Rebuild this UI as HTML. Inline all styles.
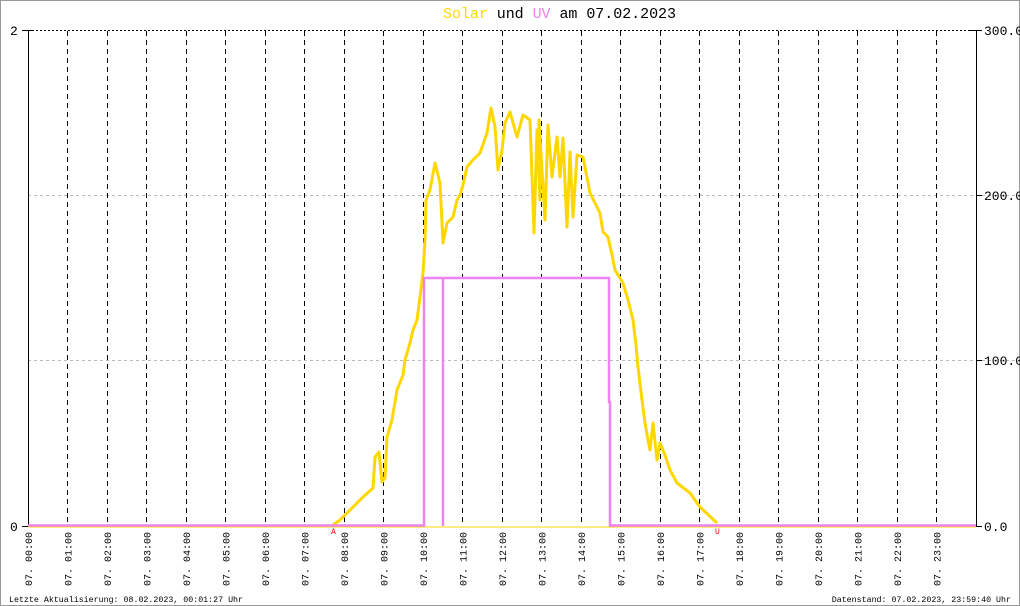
<!DOCTYPE html>
<html><head><meta charset="utf-8"><style>
html,body{margin:0;padding:0;background:#fff;}
svg{display:block;}
</style></head><body>
<svg width="1020" height="606" xmlns="http://www.w3.org/2000/svg" font-family="Liberation Mono, monospace">
<rect x="0.5" y="0.5" width="1019" height="605" fill="#fff" stroke="#999"/>
<text x="443" y="18" font-size="15" textLength="233" lengthAdjust="spacing"><tspan fill="#ffd700">Solar</tspan> und <tspan fill="#ee82ee">UV</tspan> am 07.02.2023</text>
<g stroke="#bbb" stroke-dasharray="3,3">
<line x1="28" y1="195.5" x2="1020" y2="195.5"/>
<line x1="28" y1="360.5" x2="1020" y2="360.5"/>
</g>
<line x1="28" y1="30.5" x2="976" y2="30.5" stroke="#000" stroke-dasharray="2,2"/>
<g stroke="#000" stroke-dasharray="5,4">
<line x1="67.5" y1="31" x2="67.5" y2="526"/><line x1="107.5" y1="31" x2="107.5" y2="526"/><line x1="146.5" y1="31" x2="146.5" y2="526"/><line x1="186.5" y1="31" x2="186.5" y2="526"/><line x1="225.5" y1="31" x2="225.5" y2="526"/><line x1="265.5" y1="31" x2="265.5" y2="526"/><line x1="304.5" y1="31" x2="304.5" y2="526"/><line x1="344.5" y1="31" x2="344.5" y2="526"/><line x1="383.5" y1="31" x2="383.5" y2="526"/><line x1="423.5" y1="31" x2="423.5" y2="526"/><line x1="462.5" y1="31" x2="462.5" y2="526"/><line x1="502.5" y1="31" x2="502.5" y2="526"/><line x1="541.5" y1="31" x2="541.5" y2="526"/><line x1="581.5" y1="31" x2="581.5" y2="526"/><line x1="620.5" y1="31" x2="620.5" y2="526"/><line x1="660.5" y1="31" x2="660.5" y2="526"/><line x1="699.5" y1="31" x2="699.5" y2="526"/><line x1="739.5" y1="31" x2="739.5" y2="526"/><line x1="778.5" y1="31" x2="778.5" y2="526"/><line x1="818.5" y1="31" x2="818.5" y2="526"/><line x1="857.5" y1="31" x2="857.5" y2="526"/><line x1="897.5" y1="31" x2="897.5" y2="526"/><line x1="936.5" y1="31" x2="936.5" y2="526"/>
</g>
<g stroke="#000" stroke-width="1">
<line x1="28.5" y1="30" x2="28.5" y2="527"/>
<line x1="976.5" y1="30" x2="976.5" y2="527"/>
<line x1="22" y1="30.5" x2="34" y2="30.5"/>
<line x1="970" y1="30.5" x2="982" y2="30.5"/>
<line x1="22" y1="526.5" x2="28" y2="526.5"/>
<line x1="976" y1="526.5" x2="982" y2="526.5"/>
<line x1="976" y1="195.5" x2="982" y2="195.5"/>
<line x1="976" y1="360.5" x2="982" y2="360.5"/>
</g>
<line x1="28" y1="527" x2="976" y2="527" stroke="#ffd700" stroke-width="1"/>
<polyline fill="none" stroke="#ffd700" stroke-width="3" stroke-linejoin="round" points="333,525 340,520 350,510 363,497 373,488 375,457 379,452 382,482 385,478 387,437 392,420 397,390 403,375 405,360 410,343 413,330 417,320 420,297 423,273 425,240 426,200 430,190 435,163 440,183 443,243 447,223 453,217 457,200 460,195 463,185 467,167 473,160 480,153 487,133 491,108 495,127 498,170 502,150 505,123 510,112 517,137 523,115 530,120 534,233 537,130 540,200 539,120 545,220 548,125 552,177 557,137 560,177 563,138 567,227 570,152 573,217 577,155 583,157 590,193 596,205 600,213 603,232 608,237 612,255 615,270 623,283 628,300 633,320 636,345 638,367 642,400 645,423 648,440 650,450 653,423 657,460 660,443 665,455 670,470 677,483 690,493 700,507 717,523"/>
<polyline fill="none" stroke="#ee82ee" stroke-width="2.5" points="28,525.5 424,525.5 424,278 609,278 609,402 610,402 610,525.5 976,525.5"/>
<line x1="443" y1="278" x2="443" y2="526" stroke="#ee82ee" stroke-width="2.5"/>
<text x="331" y="534" font-size="8" fill="#e00">A</text>
<text x="715" y="534" font-size="8" fill="#e00">U</text>
<g font-size="13" fill="#000">
<text x="10" y="35">2</text>
<text x="10" y="531">0</text>
<text x="984" y="35">300.0</text>
<text x="984" y="200">200.0</text>
<text x="984" y="365">100.0</text>
<text x="984" y="531">0.0</text>
</g>
<g font-size="10" fill="#000" text-anchor="end">
<text transform="translate(32,532) rotate(-90)">07. 00:00</text><text transform="translate(71.5,532) rotate(-90)">07. 01:00</text><text transform="translate(111,532) rotate(-90)">07. 02:00</text><text transform="translate(150.5,532) rotate(-90)">07. 03:00</text><text transform="translate(190,532) rotate(-90)">07. 04:00</text><text transform="translate(229.5,532) rotate(-90)">07. 05:00</text><text transform="translate(269,532) rotate(-90)">07. 06:00</text><text transform="translate(308.5,532) rotate(-90)">07. 07:00</text><text transform="translate(348,532) rotate(-90)">07. 08:00</text><text transform="translate(387.5,532) rotate(-90)">07. 09:00</text><text transform="translate(427,532) rotate(-90)">07. 10:00</text><text transform="translate(466.5,532) rotate(-90)">07. 11:00</text><text transform="translate(506,532) rotate(-90)">07. 12:00</text><text transform="translate(545.5,532) rotate(-90)">07. 13:00</text><text transform="translate(585,532) rotate(-90)">07. 14:00</text><text transform="translate(624.5,532) rotate(-90)">07. 15:00</text><text transform="translate(664,532) rotate(-90)">07. 16:00</text><text transform="translate(703.5,532) rotate(-90)">07. 17:00</text><text transform="translate(743,532) rotate(-90)">07. 18:00</text><text transform="translate(782.5,532) rotate(-90)">07. 19:00</text><text transform="translate(822,532) rotate(-90)">07. 20:00</text><text transform="translate(861.5,532) rotate(-90)">07. 21:00</text><text transform="translate(901,532) rotate(-90)">07. 22:00</text><text transform="translate(940.5,532) rotate(-90)">07. 23:00</text>
</g>
<text x="9" y="602" font-size="8.3" fill="#000">Letzte Aktualisierung: 08.02.2023, 00:01:27 Uhr</text>
<text x="1011" y="602" font-size="8.3" fill="#000" text-anchor="end">Datenstand: 07.02.2023, 23:59:40 Uhr</text>
</svg>
</body></html>
